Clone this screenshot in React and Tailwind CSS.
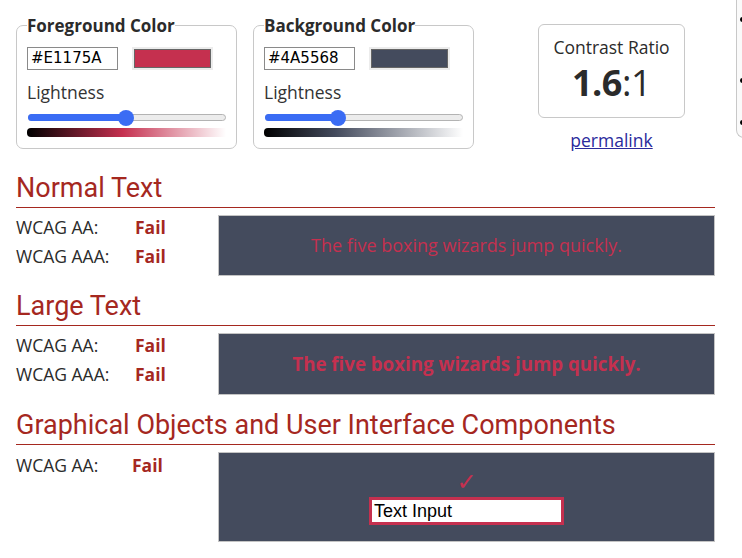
import React from "react";

const FG = "#c5304f";
const BG = "#444b5d";
const RED = "#a5281f";

function ColorBox({ title, hex, swatch, thumb, gradient, className }) {
  return (
    <fieldset className={"w-[221px] border border-[#c8c8c8] rounded-[7px] px-[10px] pb-[11px] " + className}>
      <legend className="text-[17px] leading-[23px] font-bold text-[#2b2b2b] px-0">{title}</legend>
      <div className="flex items-center gap-[14px] mt-[10px]">
        <div className="w-[91px] h-[23px] border border-[#8a8a8a] bg-white flex items-center pl-[3px] text-[15px] font-['DejaVu_Sans'] text-black">
          {hex}
        </div>
        <div className="w-[81px] h-[23px] bg-[#ececec] p-[2px]">
          <div className="w-full h-full border border-[#666]" style={{ background: swatch }} />
        </div>
      </div>
      <div className="mt-[10px] text-[17.5px] leading-[24px] text-[#333]">Lightness</div>
      <div className="relative mt-[10px] ml-[1px] w-[198px] h-[7px] rounded-full border border-[#b3b3b3] bg-[#ececec]">
        <div className="absolute left-[-1px] top-[-1px] h-[7px] rounded-full bg-[#3a6cf4]" style={{ width: thumb + 2 }} />
        <div className="absolute top-[-5.5px] w-[16px] h-[16px] rounded-full bg-[#3a6cf4]" style={{ left: thumb - 8 }} />
      </div>
      <div className="mt-[7px] w-[199px] h-[9px] rounded-l-[4px]" style={{ background: gradient }} />
    </fieldset>
  );
}

function Heading({ children, className }) {
  return (
    <h2 className={"font-['Roboto'] text-[27px] leading-[30px] pb-[4px] border-b border-[#a5281f] text-[#a5281f] w-[699px] " + (className || "")}>
      {children}
    </h2>
  );
}

function Row({ label, labelW = "w-[119px]" }) {
  return (
    <div className="flex h-[29px] items-center text-[17.5px] text-[#2b2b2b]">
      <span className={labelW}>{label}</span>
      <span className="font-bold" style={{ color: RED }}>Fail</span>
    </div>
  );
}

export default function App() {
  return (
    <div className="w-[742px] h-[558px] overflow-hidden bg-white font-['Open_Sans'] text-[#2b2b2b]">
      <div className="flex items-start pl-4">
        <ColorBox
          className="mt-[14px]"
          title="Foreground Color"
          hex="#E1175A"
          swatch={FG}
          thumb={97}
          gradient={`linear-gradient(to right, #000 0%, ${FG} 48%, #fff 100%)`}
        />
        <ColorBox
          className="mt-[14px] ml-[16px]"
          title="Background Color"
          hex="#4A5568"
          swatch={BG}
          thumb={72}
          gradient={`linear-gradient(to right, #000 0%, ${BG} 36%, #fff 100%)`}
        />
        <div className="ml-[64px] mt-[24px] flex flex-col items-center">
          <div className="w-[147px] h-[94px] border border-[#c8c8c8] rounded-[6px] flex flex-col items-center pt-[10px]">
            <div className="text-[17.5px] leading-[24px] text-[#2b2b2b]">Contrast Ratio</div>
            <div className="mt-[2px] text-[36px] leading-[44px] text-[#2b2b2b] tracking-[-0.5px]">
              <span className="font-bold">1.6</span>:1
            </div>
          </div>
          <a href="#" className="mt-[10px] text-[17.5px] leading-[24px] text-[#2a2a9c] underline">permalink</a>
        </div>
        <div className="ml-[51px] w-[200px] h-[138px] border-l border-b border-[#c8c8c8] rounded-bl-[8px] bg-[#fafafa] text-[16px]">
          <div className="flex items-center h-[10px] mt-[14px]"><span className="ml-[3px] w-[5px] h-[5px] rounded-full bg-black" /></div>
          <div className="flex items-center h-[10px] mt-[51px]"><span className="ml-[3px] w-[5px] h-[5px] rounded-full bg-black" /></div>
          <div className="flex items-center h-[10px] mt-[32px]"><span className="ml-[3px] w-[5px] h-[5px] rounded-full bg-black" /></div>
        </div>
      </div>

      <div className="pl-4">
        <Heading className="mt-[21px]">Normal Text</Heading>
        <div className="flex mt-[7px]">
          <div className="w-[202px] -mt-[2px]">
            <Row label="WCAG AA:" />
            <Row label="WCAG AAA:" />
          </div>
          <div className="w-[497px] h-[61px] border border-[#c4c4c4] flex items-center justify-center text-[18px]" style={{ background: BG, color: FG }}>
            The five boxing wizards jump quickly.
          </div>
        </div>

        <Heading className="mt-[15px]">Large Text</Heading>
        <div className="flex mt-[7px]">
          <div className="w-[202px] -mt-[2px]">
            <Row label="WCAG AA:" />
            <Row label="WCAG AAA:" />
          </div>
          <div className="w-[497px] h-[62px] border border-[#c4c4c4] flex items-center justify-center text-[18.7px] font-bold" style={{ background: BG, color: FG }}>
            The five boxing wizards jump quickly.
          </div>
        </div>

        <Heading className="mt-[15px]">Graphical Objects and User Interface Components</Heading>
        <div className="flex mt-[7px]">
          <div className="w-[202px] -mt-[1px]">
            <Row label="WCAG AA:" labelW="w-[116px]" />
          </div>
          <div className="w-[497px] h-[90px] border border-[#c4c4c4] flex flex-col items-center pt-[16px]" style={{ background: BG }}>
            <div className="font-['DejaVu_Sans'] text-[24px] leading-[26px]" style={{ color: FG }}>✓</div>
            <div className="mt-[2px] w-[195px] h-[28px] bg-white border-[3px] flex items-center pl-[2px] font-['Liberation_Sans'] text-[18px] text-black" style={{ borderColor: FG }}>
              Text Input
            </div>
          </div>
        </div>
      </div>
    </div>
  );
}
